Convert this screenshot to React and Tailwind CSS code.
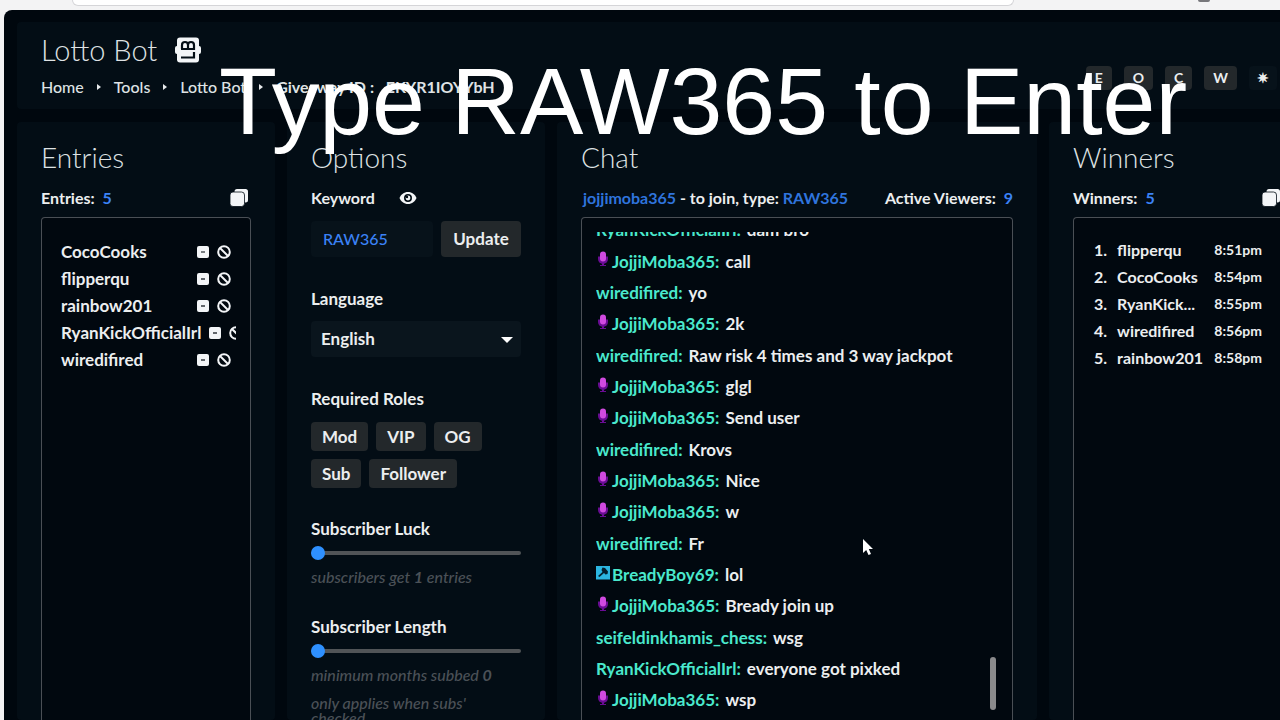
import React, { useState } from 'react';

const entries = ['CocoCooks', 'flipperqu', 'rainbow201', 'RyanKickOfficialIrl', 'wiredifired'];

const winners = [
  { name: 'flipperqu', time: '8:51pm' },
  { name: 'CocoCooks', time: '8:54pm' },
  { name: 'RyanKick...', time: '8:55pm' },
  { name: 'wiredifired', time: '8:56pm' },
  { name: 'rainbow201', time: '8:58pm' },
];

const messages = [
  { user: 'RyanKickOfficialIrl', text: 'dam bro' },
  { user: 'JojjiMoba365', text: 'call', badge: 'host' },
  { user: 'wiredifired', text: 'yo' },
  { user: 'JojjiMoba365', text: '2k', badge: 'host' },
  { user: 'wiredifired', text: 'Raw risk 4 times and 3 way jackpot' },
  { user: 'JojjiMoba365', text: 'glgl', badge: 'host' },
  { user: 'JojjiMoba365', text: 'Send user', badge: 'host' },
  { user: 'wiredifired', text: 'Krovs' },
  { user: 'JojjiMoba365', text: 'Nice', badge: 'host' },
  { user: 'JojjiMoba365', text: 'w', badge: 'host' },
  { user: 'wiredifired', text: 'Fr' },
  { user: 'BreadyBoy69', text: 'lol', badge: 'mod' },
  { user: 'JojjiMoba365', text: 'Bready join up', badge: 'host' },
  { user: 'seifeldinkhamis_chess', text: 'wsg' },
  { user: 'RyanKickOfficialIrl', text: 'everyone got pixked' },
  { user: 'JojjiMoba365', text: 'wsp', badge: 'host' },
];

const roles = ['Mod', 'VIP', 'OG', 'Sub', 'Follower'];

const BotLogo = () => (
  <svg viewBox="0 0 26 26" className="w-[26px] h-[26px]" aria-hidden="true">
    <rect x="2" y="0.500" width="22" height="25" rx="3" fill="#f3f5f7" />
    <rect x="0" y="9" width="26" height="8" rx="2" fill="#f3f5f7" />
    <path d="M7 12V8a2.500 2.500 0 0 1 6 0V12M13 8a2.500 2.500 0 0 1 6 0V12H6" fill="none" stroke="#030d15" strokeWidth="2.200" />
    <path d="M6 20.500H19V15" fill="none" stroke="#030d15" strokeWidth="2.200" />
  </svg>
);

const CopyIcon = () => (
  <svg viewBox="0 0 18 18" className="w-[18px] h-[18px]" aria-hidden="true">
    <rect x="4.500" y="0" width="13.500" height="13.500" rx="2.500" fill="#f3f5f7" />
    <rect x="0" y="3" width="14.500" height="14.500" rx="3" fill="#f3f5f7" stroke="#030d15" strokeWidth="0.800" />
  </svg>
);

const MinusIcon = () => (
  <svg viewBox="0 0 12 12" className="w-3 h-3" aria-hidden="true">
    <rect width="12" height="12" rx="2" fill="#f3f5f7" />
    <path d="M4 6H8" stroke="#01080f" strokeWidth="1.200" />
  </svg>
);

const BanIcon = () => (
  <svg viewBox="0 0 14 14" className="w-3.5 h-3.5" fill="none" stroke="#f3f5f7" strokeWidth="2" aria-hidden="true">
    <circle cx="7" cy="7" r="5.800" />
    <path d="M3 3L11 11" />
  </svg>
);

const EyeIcon = () => (
  <svg viewBox="0 0 18 12" className="w-[18px] h-3" aria-hidden="true">
    <path d="M9 0C5 0 2 2.500 0.500 6C2 9.500 5 12 9 12S16 9.500 17.500 6C16 2.500 13 0 9 0Z" fill="#f3f5f7" />
    <circle cx="9" cy="6" r="3.200" fill="none" stroke="#030d15" strokeWidth="1.600" />
    <circle cx="8" cy="5" r="1.200" fill="#030d15" />
  </svg>
);

const Badge = ({ type }) => {
  if (type === 'host') {
    return (
      <svg viewBox="0 0 16 16" className="w-4 h-4 mb-1 shrink-0" aria-hidden="true">
        <path d="M2 5.500V8a5 5 0 0 0 10 0V5.500H2Z" fill="#6a0c94" />
        <rect x="4" y="0.500" width="6" height="10" rx="3" fill="#d04ae0" />
        <path d="M6 12H8V14H10V15H4V14H6Z" fill="#6a0c94" />
      </svg>
    );
  }
  return (
    <svg viewBox="0 0 16 16" className="w-4 h-4 mb-1 shrink-0" aria-hidden="true">
      <rect y="1" width="14" height="13.500" fill="#2bb5e0" />
      <path d="M6.500 2.500L9 3L12 6.500L11.500 9L9.500 9.500L8 8L3.500 12L2 11L6.500 7L5.500 5Z" fill="#04202e" />
    </svg>
  );
};

const Panel = ({ title, children }) => (
  <section className="flex flex-col min-w-0 bg-[#030d15] rounded px-6 pt-[19px]">
    <h2 className="text-[28px] leading-8 font-light text-[#dfe2e4]">{title}</h2>
    {children}
  </section>
);

const ListBox = ({ className = '', children }) => (
  <div className={`relative flex-1 mt-[7px] min-h-0 rounded-t border border-b-0 border-[#4a4f55] bg-[#01080f] ${className}`}>
    {children}
  </div>
);

const Slider = ({ id, label, children }) => (
  <div className="flex flex-col shrink-0">
    <label htmlFor={id} className="text-[17px] leading-6">{label}</label>
    <input
      id={id}
      type="range"
      min="0"
      max="10"
      defaultValue="0"
      className="appearance-none w-full h-1 my-[10px] rounded bg-[#515457] [&::-webkit-slider-thumb]:appearance-none [&::-webkit-slider-thumb]:w-3.5 [&::-webkit-slider-thumb]:h-3.5 [&::-webkit-slider-thumb]:rounded-full [&::-webkit-slider-thumb]:bg-[#2e90ff]"
    />
    {children}
  </div>
);

const Separator = () => (
  <span className="w-0 h-0 border-y-[3px] border-y-transparent border-l-4 border-l-[#e8eaec]" />
);

const App = () => {
  const [keyword, setKeyword] = useState('RAW365');

  return (
    <div className="relative h-screen overflow-hidden flex flex-col bg-[#f3f3f4] font-[Lato,sans-serif] text-base font-bold text-[#eceeef]">

      {/* Browser toolbar edge */}
      <div className="h-[10px] shrink-0 flex items-start pl-[72px]">
        <div className="w-[78%] h-1.5 bg-white border border-t-0 border-[#d5d5d8] rounded-b-xl" />
        <div className="ml-auto mr-[70px] w-3 h-0.5 rounded-b-full bg-[#77777b]" />
      </div>

      <div className="flex-1 min-h-0 flex flex-col ml-1 pl-[13px] pt-3 bg-[#00070e] rounded-tl-lg overflow-hidden">

        {/* Header */}
        <header className="-mr-[27px] flex items-center justify-between bg-[#030d15] rounded pl-6 pr-[30px] pt-3 pb-2 shrink-0">
          <div>
            <div className="flex items-center gap-[18px]">
              <h1 className="text-[29px] leading-8 font-light text-[#dfe2e4]">Lotto Bot</h1>
              <BotLogo />
            </div>
            <nav className="flex items-center gap-[13px] mt-[7px] h-7 font-medium text-[#dfe2e4]">
              <a href="#home">Home</a>
              <Separator />
              <a href="#tools">Tools</a>
              <Separator />
              <a href="#lotto">Lotto Bot</a>
              <Separator />
              <span className="font-bold">Giveaway ID : &nbsp;&nbsp;EKYR1IOYYbH</span>
            </nav>
          </div>
          <div className="flex gap-3 mt-5 text-sm leading-6">
            <button className="px-[9px] rounded bg-[#23282b]">E</button>
            <button className="px-[9px] rounded bg-[#23282b]">O</button>
            <button className="px-[9px] rounded bg-[#23282b]">C</button>
            <button className="px-[9px] rounded bg-[#23282b]">W</button>
            <button className="px-2 rounded bg-[#07121a]">✷</button>
          </div>
        </header>

        <main className="-mr-[27px] mt-[13px] flex-1 min-h-0 grid grid-cols-[258fr_258fr_480fr_258fr] grid-rows-[minmax(0,1fr)] gap-3">

          {/* Entries */}
          <Panel title="Entries">
            <div className="flex items-center justify-between h-6 mt-[13px] pr-[3px]">
              <span>Entries: <span className="ml-1 text-[#3b82f6]">5</span></span>
              <button aria-label="Copy entries"><CopyIcon /></button>
            </div>
            <ListBox className="px-[14px] pt-5">
              <ul className="overflow-hidden pl-[5px] text-[17px]">
                {entries.map((name) => (
                  <li key={name} className="flex items-center justify-between h-[27px]">
                    <span>{name}</span>
                    <span className="flex items-center gap-2 ml-2 mr-[5px] shrink-0">
                      <button aria-label={`Remove ${name}`}><MinusIcon /></button>
                      <button aria-label={`Ban ${name}`}><BanIcon /></button>
                    </span>
                  </li>
                ))}
              </ul>
            </ListBox>
          </Panel>

          {/* Options */}
          <Panel title="Options">
            <div className="flex items-center gap-6 h-6 mt-[13px] shrink-0">
              <label htmlFor="keyword">Keyword</label>
              <button aria-label="Toggle keyword"><EyeIcon /></button>
            </div>
            <div className="flex gap-2 mt-[11px] h-9 shrink-0">
              <input
                id="keyword"
                value={keyword}
                onChange={(e) => setKeyword(e.target.value)}
                className="flex-1 min-w-0 px-3 rounded bg-[#07121a] text-[#3b82f6] font-medium outline-none"
              />
              <button className="w-20 rounded bg-[#23282b] text-[17px]">Update</button>
            </div>
            <label htmlFor="language" className="mt-[30px] text-[17px] leading-6 shrink-0">Language</label>
            <div className="relative mt-2.5 shrink-0">
              <select id="language" className="block appearance-none w-full h-9 px-2.5 rounded bg-[#0a151d] text-[17px] outline-none">
                <option>English</option>
              </select>
              <span className="absolute right-2 top-4 border-x-[6px] border-x-transparent border-t-[6px] border-t-white pointer-events-none" />
            </div>
            <h3 className="mt-[30px] text-[17px] leading-6 shrink-0">Required Roles</h3>
            <div className="flex flex-wrap gap-2 mt-[11px] mb-[29px] shrink-0">
              {roles.map((role) => (
                <button key={role} className="h-[29px] px-[11px] rounded bg-[#23282b] text-[17px]">{role}</button>
              ))}
            </div>
            <Slider id="luck" label="Subscriber Luck">
              <p className="mb-[26px] leading-6 italic font-medium text-[#4b5157]">subscribers get <b>1</b> entries</p>
            </Slider>
            <Slider id="length" label="Subscriber Length">
              <p className="leading-6 italic font-medium text-[#4b5157]">minimum months subbed <b>0</b></p>
              <p className="mt-2 pr-8 leading-[15px] italic font-medium text-[#4b5157]">only applies when subs' checked</p>
            </Slider>
          </Panel>

          {/* Chat */}
          <Panel title="Chat">
            <div className="flex items-center justify-between h-6 mt-[13px] pl-0.5 whitespace-nowrap">
              <span><span className="text-[#2f74dd]">jojjimoba365</span> - to join, type: <span className="text-[#2f74dd]">RAW365</span></span>
              <span>Active Viewers: <span className="ml-1 text-[#3b82f6]">9</span></span>
            </div>
            <ListBox className="px-[14px] pt-[14px] flex">
              <div className="flex-1 overflow-hidden">
                <ul className="flex flex-col justify-between h-[500px] -mt-[17px] text-[17px]">
                  {messages.map((msg, index) => (
                    <li key={index} className="flex items-center h-[30px]">
                      {msg.badge && <Badge type={msg.badge} />}
                      <span className="text-[#4ae8cd]">{msg.user}:</span>
                      <span className="ml-1.5">{msg.text}</span>
                    </li>
                  ))}
                </ul>
              </div>
              <div className="absolute right-4 bottom-[10px] w-1.5 h-[53px] rounded-full bg-[#8a8a8c]" />
            </ListBox>
          </Panel>

          {/* Winners */}
          <Panel title="Winners">
            <div className="flex items-center justify-between h-6 mt-[13px] pr-[3px]">
              <span>Winners: <span className="ml-1 text-[#3b82f6]">5</span></span>
              <button aria-label="Copy winners"><CopyIcon /></button>
            </div>
            <ListBox className="px-5 pt-[18px]">
              <ol>
                {winners.map((winner, index) => (
                  <li key={winner.name} className="flex items-center h-[27px]">
                    <span className="mr-2.5">{index + 1}.</span>
                    <span className="flex-1">{winner.name}</span>
                    <span className="text-sm">{winner.time}</span>
                  </li>
                ))}
              </ol>
            </ListBox>
          </Panel>
        </main>
      </div>

      {/* Stream caption */}
      <p className="absolute top-[46px] left-[219px] whitespace-nowrap font-['Liberation_Sans',sans-serif] font-normal text-[95px] leading-[110px] text-white pointer-events-none">
        Type RAW365 to Enter
      </p>

      {/* Mouse pointer */}
      <svg viewBox="0 0 12 18" className="absolute left-[862px] top-[538px] w-3 h-[18px] pointer-events-none" aria-hidden="true">
        <path d="M1 1V15L4.200 12L6.500 17L9 16L6.800 11H11Z" fill="#fff" />
      </svg>
    </div>
  );
};

export default App;
